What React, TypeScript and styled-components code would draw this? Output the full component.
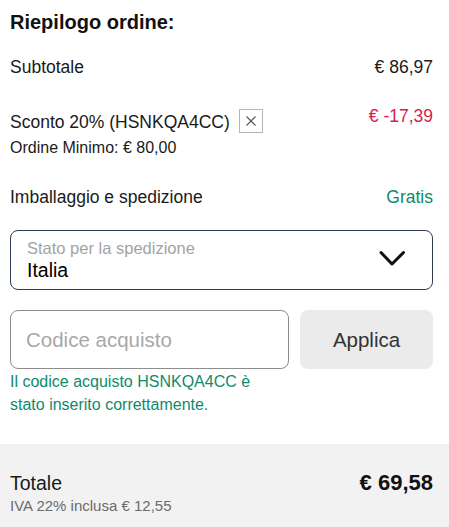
import React from "react";
import styled, { createGlobalStyle } from "styled-components";

const GlobalStyle = createGlobalStyle`
  html, body {
    margin: 0;
    padding: 0;
    background: #fff;
    font-family: "Liberation Sans", Arial, sans-serif;
    color: #1a1a1a;
  }
`;

export default function App() {
  return (
    <>
      <GlobalStyle />
      <Summary>
        <Title>Riepilogo ordine:</Title>
        <Row $top={22}>
          <Label>Subtotale</Label>
          <Amount>€ 86,97</Amount>
        </Row>
        <Row $top={27}>
          <DiscountBlock>
            <DiscountLine>
              <Label>Sconto 20% (HSNKQA4CC)</Label>
              <RemoveButton aria-label="Rimuovi">
                <svg width="12" height="12" viewBox="0 0 12 12">
                  <path d="M1.5 1.5 L10.5 10.5 M10.5 1.5 L1.5 10.5" stroke="#555" strokeWidth="1.1" fill="none" />
                </svg>
              </RemoveButton>
            </DiscountLine>
            <Note>Ordine Minimo: € 80,00</Note>
          </DiscountBlock>
          <Amount $tone="discount">€ -17,39</Amount>
        </Row>
        <Row $top={28}>
          <Label>Imballaggio e spedizione</Label>
          <Amount $tone="free">Gratis</Amount>
        </Row>
        <Select>
          <SelectText>
            <SelectLabel>Stato per la spedizione</SelectLabel>
            <SelectValue>Italia</SelectValue>
          </SelectText>
          <svg width="28" height="18" viewBox="0 0 28 18">
            <polyline points="3,3.5 14,15 25.5,3.5" stroke="#111" strokeWidth="3" fill="none" strokeLinecap="round" strokeLinejoin="round" />
          </svg>
        </Select>
        <CodeRow>
          <CodeColumn>
            <CodeInput placeholder="Codice acquisto" />
            <Success>Il codice acquisto HSNKQA4CC è stato inserito correttamente.</Success>
          </CodeColumn>
          <ApplyButton>Applica</ApplyButton>
        </CodeRow>
      </Summary>
      <Footer>
        <div>
          <TotalLabel>Totale</TotalLabel>
          <Vat>IVA 22% inclusa € 12,55</Vat>
        </div>
        <TotalAmount>€ 69,58</TotalAmount>
      </Footer>
    </>
  );
}

const Summary = styled.section`
  padding: 10px 16px 28px 10px;
`;

const Title = styled.h2`
  margin: 0;
  font-size: 20px;
  line-height: 24px;
  font-weight: 700;
  color: #111;
`;

const Row = styled.div<{ $top: number }>`
  display: flex;
  justify-content: space-between;
  align-items: flex-start;
  margin-top: ${(p) => p.$top}px;
`;

const Label = styled.span`
  font-size: 17.5px;
  line-height: 22px;
  color: #1a1a1a;
`;

const Amount = styled.span<{ $tone?: "discount" | "free" }>`
  font-size: 17.5px;
  line-height: 22px;
  color: ${(p) => (p.$tone === "discount" ? "#d81c4c" : p.$tone === "free" ? "#0f8a6c" : "#1a1a1a")};
`;

const DiscountBlock = styled.div`
  padding-top: 4px;
`;

const DiscountLine = styled.div`
  display: flex;
  align-items: center;
  gap: 9px;
  padding-top: 1px;
`;

const RemoveButton = styled.button`
  width: 24px;
  height: 24px;
  padding: 0;
  margin-top: -1px;
  display: flex;
  align-items: center;
  justify-content: center;
  background: #fff;
  border: 1px solid #b5b5b5;
  cursor: pointer;
`;

const Note = styled.div`
  margin-top: 5px;
  font-size: 16px;
  line-height: 20px;
  color: #1a1a1a;
`;

const Select = styled.div`
  margin-top: 22px;
  height: 60px;
  box-sizing: border-box;
  border: 1px solid #2e3a52;
  border-radius: 8px;
  padding: 8px 26px 0 16px;
  display: flex;
  justify-content: space-between;
  align-items: flex-start;
  svg {
    margin-top: 10px;
  }
`;

const SelectText = styled.div`
  display: flex;
  flex-direction: column;
  gap: 1px;
`;

const SelectLabel = styled.span`
  font-size: 16.5px;
  line-height: 19px;
  color: #a3a3a3;
`;

const SelectValue = styled.span`
  font-size: 19.5px;
  line-height: 23px;
  color: #000;
`;

const CodeRow = styled.div`
  display: flex;
  gap: 11px;
  margin-top: 20px;
`;

const CodeColumn = styled.div`
  flex: 0 0 279px;
`;

const CodeInput = styled.input`
  display: block;
  width: 100%;
  height: 59px;
  box-sizing: border-box;
  border: 1px solid #8d8d8d;
  border-radius: 8px;
  padding: 0 15px;
  font-family: "Liberation Sans", Arial, sans-serif;
  font-size: 20.5px;
  color: #1a1a1a;
  outline: none;
  &::placeholder {
    color: #a8a8a8;
  }
`;

const Success = styled.p`
  margin: 1px 0 0;
  font-size: 16px;
  line-height: 23px;
  color: #0f8a6c;
`;

const ApplyButton = styled.button`
  flex: 1;
  height: 59px;
  border: none;
  border-radius: 8px;
  background: #ebebeb;
  font-family: "Liberation Sans", Arial, sans-serif;
  font-size: 20.5px;
  color: #333;
  cursor: pointer;
`;

const Footer = styled.footer`
  background: #f2f2f2;
  padding: 27px 16px 20px 10px;
  display: flex;
  justify-content: space-between;
  align-items: flex-start;
`;

const TotalLabel = styled.div`
  font-size: 19.5px;
  line-height: 24px;
  color: #1a1a1a;
`;

const Vat = styled.div`
  margin-top: 1px;
  font-size: 15px;
  line-height: 20px;
  color: #6b6b6b;
`;

const TotalAmount = styled.div`
  font-size: 22px;
  line-height: 24px;
  font-weight: 700;
  color: #111;
`;
